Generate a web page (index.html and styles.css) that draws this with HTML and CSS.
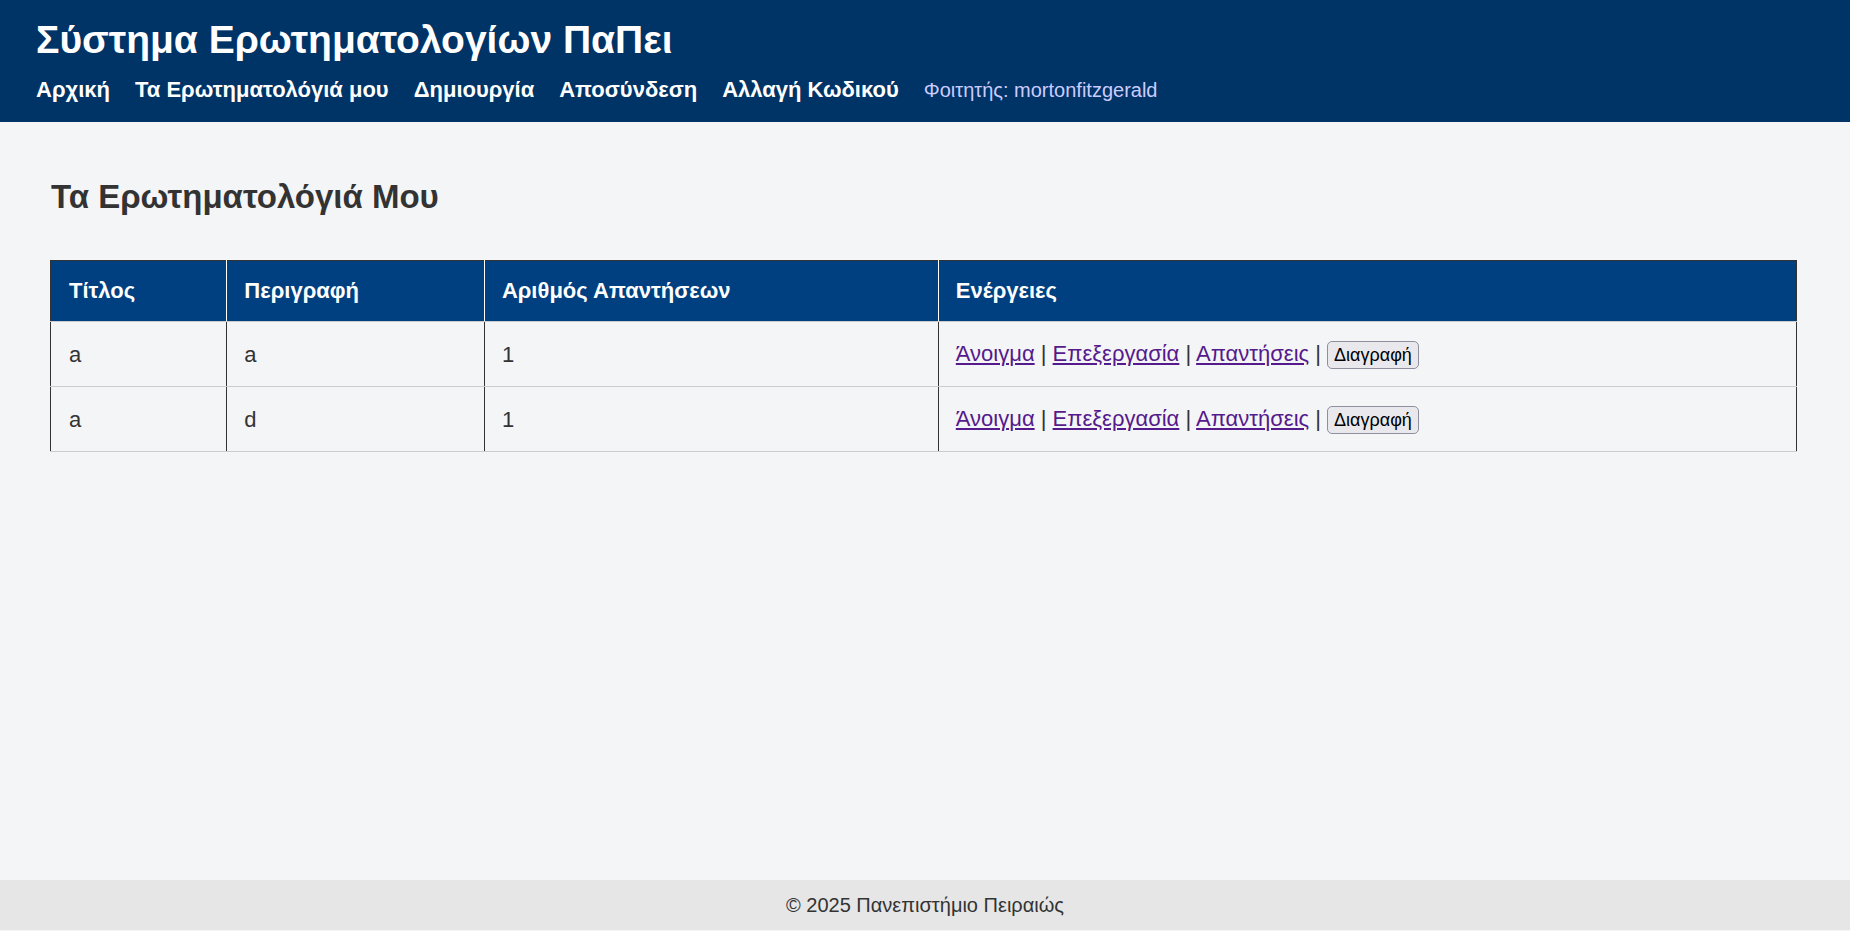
FILE: index.html
```html
<!DOCTYPE html>
<html lang="el">
<head>
<meta charset="utf-8">
<title>Τα Ερωτηματολόγιά Μου</title>
<link rel="stylesheet" href="styles.css">
</head>
<body>
<header class="site-header">
  <h1 class="site-title">Σύστημα Ερωτηματολογίων ΠαΠει</h1>
  <nav class="site-nav">
    <a href="#">Αρχική</a>
    <a href="#">Τα Ερωτηματολόγιά μου</a>
    <a href="#">Δημιουργία</a>
    <a href="#">Αποσύνδεση</a>
    <a href="#">Αλλαγή Κωδικού</a>
    <span class="user">Φοιτητής: mortonfitzgerald</span>
  </nav>
</header>
<main class="content">
  <h2 class="page-title">Τα Ερωτηματολόγιά Μου</h2>
  <table class="surveys">
    <colgroup><col class="col-title"><col class="col-desc"><col class="col-count"><col></colgroup>
    <thead>
      <tr><th scope="col">Τίτλος</th><th scope="col">Περιγραφή</th><th scope="col">Αριθμός Απαντήσεων</th><th scope="col">Ενέργειες</th></tr>
    </thead>
    <tbody>
      <tr>
        <td>a</td><td>a</td><td>1</td>
        <td><a href="#">Άνοιγμα</a> | <a href="#">Επεξεργασία</a> | <a href="#">Απαντήσεις</a> | <button type="button" class="delete">Διαγραφή</button></td>
      </tr>
      <tr>
        <td>a</td><td>d</td><td>1</td>
        <td><a href="#">Άνοιγμα</a> | <a href="#">Επεξεργασία</a> | <a href="#">Απαντήσεις</a> | <button type="button" class="delete">Διαγραφή</button></td>
      </tr>
    </tbody>
  </table>
</main>
<footer class="site-footer">© 2025 Πανεπιστήμιο Πειραιώς</footer>
</body>
</html>
```
FILE: styles.css
```css
* {
  box-sizing: border-box;
}

body {
  display: flex;
  flex-direction: column;
  min-height: 100vh;
  margin: 0;
  padding-bottom: 1px;
  background: #f4f5f7;
  color: #333;
  font-family: "Liberation Sans", Arial, sans-serif;
  font-size: 22px;
}

.site-header {
  padding: 18px 36px 17px;
  background: #003366;
  color: #fff;
}

.site-title {
  margin: 0 0 13px;
  font-size: 39px;
  line-height: 44px;
}

.site-nav {
  display: flex;
  align-items: baseline;
  gap: 25px;
  line-height: 30px;
}

.site-nav a {
  color: #fff;
  font-weight: bold;
  text-decoration: none;
}

.user {
  color: #ccccff;
  font-size: 20px;
}

.content {
  flex: 1;
  padding: 55px 53px 55px 50px;
}

.page-title {
  margin: 0 1px 43px;
  font-size: 33px;
  line-height: 40px;
}

.surveys {
  width: 100%;
  table-layout: fixed;
  border: 1px solid #333;
  border-collapse: collapse;
}

.col-title {
  width: 10.1%;
}

.col-desc {
  width: 14.75%;
}

.col-count {
  width: 26%;
}

.surveys th,
.surveys td {
  padding: 18px 17px 17px;
  border-bottom: 1px solid #ccc;
  line-height: 28px;
  text-align: left;
}

.surveys th {
  padding: 16px 17px;
  background: #004080;
  color: #fff;
}

.surveys th:first-child,
.surveys td:first-child {
  padding-left: 18px;
}

.surveys th + th {
  border-left: 1px solid #fff;
}

.surveys td {
  border-left: 1px solid #333;
}

.surveys a {
  color: #551a8b;
}

.delete {
  padding: 2px 6px;
  border: 1px solid #8f8f9d;
  border-radius: 5px;
  background: #e9e9ed;
  color: #000;
  font-family: inherit;
  font-size: 18px;
  line-height: 22px;
}

.site-footer {
  padding: 13px;
  background: #e6e6e6;
  font-size: 20px;
  line-height: 24px;
  text-align: center;
}
```
